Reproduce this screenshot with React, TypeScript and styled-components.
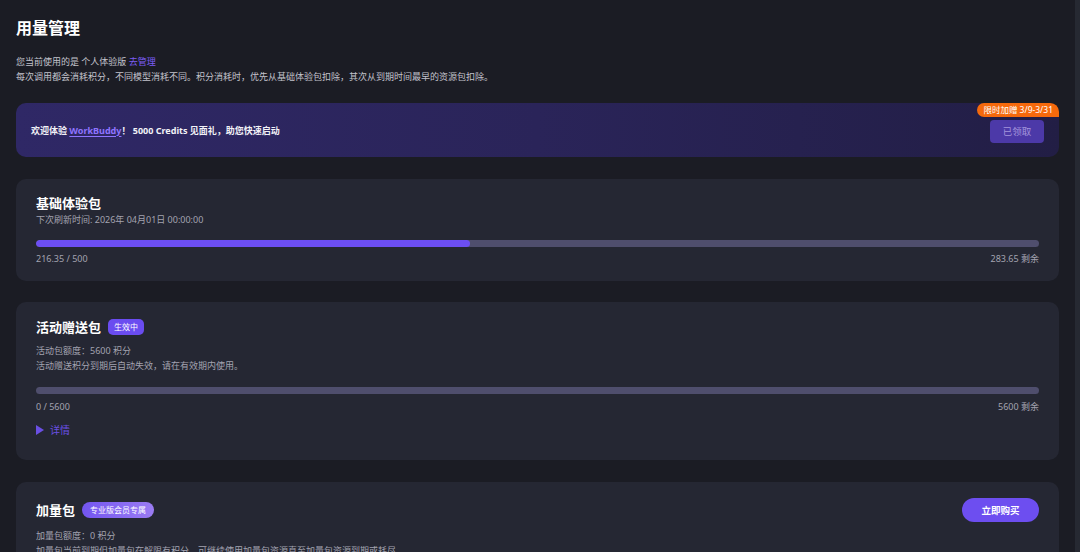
import React from "react";
import styled, { createGlobalStyle } from "styled-components";

const GlobalStyle = createGlobalStyle`
  html, body { margin: 0; padding: 0; background: #1b1c24; }
  body {
    font-family: "Noto Sans", "Noto Sans CJK SC", sans-serif;
    color: #e6e6ec;
    overflow: hidden;
  }
  * { box-sizing: border-box; }
`;

const Page = styled.div`
  display: flex;
  height: 552px;
  background: #1b1c24;
`;

const Main = styled.main`
  flex: 1;
  padding: 16px 16px 0 16px;
  overflow: hidden;
`;

const ScrollTrack = styled.div`
  width: 5px;
  background: #262932;
`;

const Title = styled.h1`
  margin: 0;
  font-size: 16px;
  line-height: 24px;
  font-weight: 700;
  color: #ffffff;
`;

const Intro = styled.div`
  margin-top: 14px;
  font-size: 9px;
  line-height: 15px;
  color: #c3c3cc;
`;

const Link = styled.a`
  color: #7b5cf5;
  text-decoration: none;
`;

const Banner = styled.div`
  position: relative;
  margin-top: 19px;
  height: 54px;
  border-radius: 10px;
  background: linear-gradient(90deg, #2f2866 0%, #2a2459 50%, #221e45 100%);
  display: flex;
  align-items: center;
  justify-content: space-between;
  padding: 0 15px 0 15px;
`;

const BannerText = styled.div`
  font-size: 9px;
  font-weight: 700;
  color: #f2f2f7;
`;

const Underlined = styled.span`
  color: #8e74ff;
  text-decoration: underline;
  text-underline-offset: 2px;
`;

const Ribbon = styled.div`
  position: absolute;
  top: 0;
  right: 0;
  height: 14px;
  padding: 0 6px;
  font-size: 8.5px;
  line-height: 14px;
  color: #ffffff;
  background: #f5690c;
  border-radius: 8px 10px 0 8px;
`;

const ClaimedButton = styled.div`
  margin-top: 2px;
  width: 54px;
  height: 23px;
  border-radius: 4px;
  background: #4c39a8;
  color: #a495dc;
  font-size: 9.5px;
  display: flex;
  align-items: center;
  justify-content: center;
`;

const Card = styled.section<{ $gap: number; $top: number; $bottom: number }>`
  margin-top: ${(p) => p.$gap}px;
  background: #252733;
  border-radius: 10px;
  padding: ${(p) => p.$top}px 20px ${(p) => p.$bottom}px 20px;
`;

const HeaderRow = styled.div<{ $tall?: boolean }>`
  display: flex;
  align-items: center;
  justify-content: space-between;
  height: ${(p) => (p.$tall ? 24 : 18)}px;
`;

const TitleGroup = styled.div`
  display: flex;
  align-items: center;
  gap: 7px;
`;

const CardTitle = styled.h2`
  margin: 0;
  font-size: 13px;
  line-height: 18px;
  font-weight: 700;
  color: #ffffff;
`;

const Badge = styled.span<{ $pill?: boolean }>`
  height: 16px;
  padding: 0 ${(p) => (p.$pill ? 8 : 6)}px;
  border-radius: ${(p) => (p.$pill ? 8 : 5)}px;
  font-size: 8px;
  line-height: 16px;
  color: #ffffff;
  background: ${(p) =>
    p.$pill ? "linear-gradient(90deg, #7355f0, #9b7cf3)" : "#6a4cf0"};
`;

const BuyButton = styled.button`
  width: 77px;
  height: 24px;
  border: none;
  border-radius: 12px;
  background: #6d4ef0;
  color: #ffffff;
  font-family: inherit;
  font-size: 9.5px;
  font-weight: 700;
  cursor: pointer;
`;

const Meta = styled.div<{ $top: number }>`
  margin-top: ${(p) => p.$top}px;
  font-size: 9px;
  line-height: 15px;
  color: #a3a3b0;
`;

const Track = styled.div<{ $top: number }>`
  margin-top: ${(p) => p.$top}px;
  height: 7px;
  border-radius: 4px;
  background: #4f4e6d;
  overflow: hidden;
`;

const Fill = styled.div`
  height: 100%;
  border-radius: 4px;
  background: #6c4ef3;
`;

const Labels = styled.div<{ $top: number }>`
  margin-top: ${(p) => p.$top}px;
  display: flex;
  justify-content: space-between;
  font-size: 9px;
  line-height: 14px;
  color: #a3a3b0;
`;

const Details = styled.div`
  margin-top: 9px;
  display: flex;
  align-items: center;
  gap: 6px;
  font-size: 10px;
  line-height: 14px;
  color: #6a4fe3;
`;

const Triangle = styled.span`
  width: 0;
  height: 0;
  border-top: 5px solid transparent;
  border-bottom: 5px solid transparent;
  border-left: 8px solid #6a4fe3;
`;

function Progress({
  used,
  total,
  top,
  labelTop,
}: {
  used: number;
  total: number;
  top: number;
  labelTop: number;
}) {
  const pct = (used / total) * 100;
  return (
    <>
      <Track $top={top}>{pct > 0 && <Fill style={{ width: `${pct}%` }} />}</Track>
      <Labels $top={labelTop}>
        <span>
          {used} / {total}
        </span>
        <span>{+(total - used).toFixed(2)} 剩余</span>
      </Labels>
    </>
  );
}

export default function App() {
  return (
    <>
      <GlobalStyle />
      <Page>
        <Main>
          <Title>用量管理</Title>
          <Intro>
            <div>
              您当前使用的是 个人体验版 <Link>去管理</Link>
            </div>
            <div>
              每次调用都会消耗积分，不同模型消耗不同。积分消耗时，优先从基础体验包扣除，其次从到期时间最早的资源包扣除。
            </div>
          </Intro>

          <Banner>
            <BannerText>
              欢迎体验 <Underlined>WorkBuddy</Underlined>！ 5000 Credits 见面礼，助您快速启动
            </BannerText>
            <ClaimedButton>已领取</ClaimedButton>
            <Ribbon>限时加赠 3/9-3/31</Ribbon>
          </Banner>

          <Card $gap={22} $top={15} $bottom={15}>
            <HeaderRow>
              <CardTitle>基础体验包</CardTitle>
            </HeaderRow>
            <Meta $top={0}>下次刷新时间: 2026年 04月01日 00:00:00</Meta>
            <Progress used={216.35} total={500} top={13} labelTop={5} />
          </Card>

          <Card $gap={21} $top={16} $bottom={23}>
            <HeaderRow>
              <TitleGroup>
                <CardTitle>活动赠送包</CardTitle>
                <Badge>生效中</Badge>
              </TitleGroup>
            </HeaderRow>
            <Meta $top={7}>活动包额度：5600 积分</Meta>
            <Meta $top={0}>活动赠送积分到期后自动失效，请在有效期内使用。</Meta>
            <Progress used={0} total={5600} top={14} labelTop={6} />
            <Details>
              <Triangle />
              详情
            </Details>
          </Card>

          <Card $gap={22} $top={16} $bottom={16}>
            <HeaderRow $tall>
              <TitleGroup>
                <CardTitle>加量包</CardTitle>
                <Badge $pill>专业版会员专属</Badge>
              </TitleGroup>
              <BuyButton>立即购买</BuyButton>
            </HeaderRow>
            <Meta $top={6}>加量包额度：0 积分</Meta>
            <Meta $top={0}>
              加量包当前到期但加量包在解限有积分，可继续使用加量包资源直至加量包资源到期或耗尽。
            </Meta>
          </Card>
        </Main>
        <ScrollTrack />
      </Page>
    </>
  );
}
